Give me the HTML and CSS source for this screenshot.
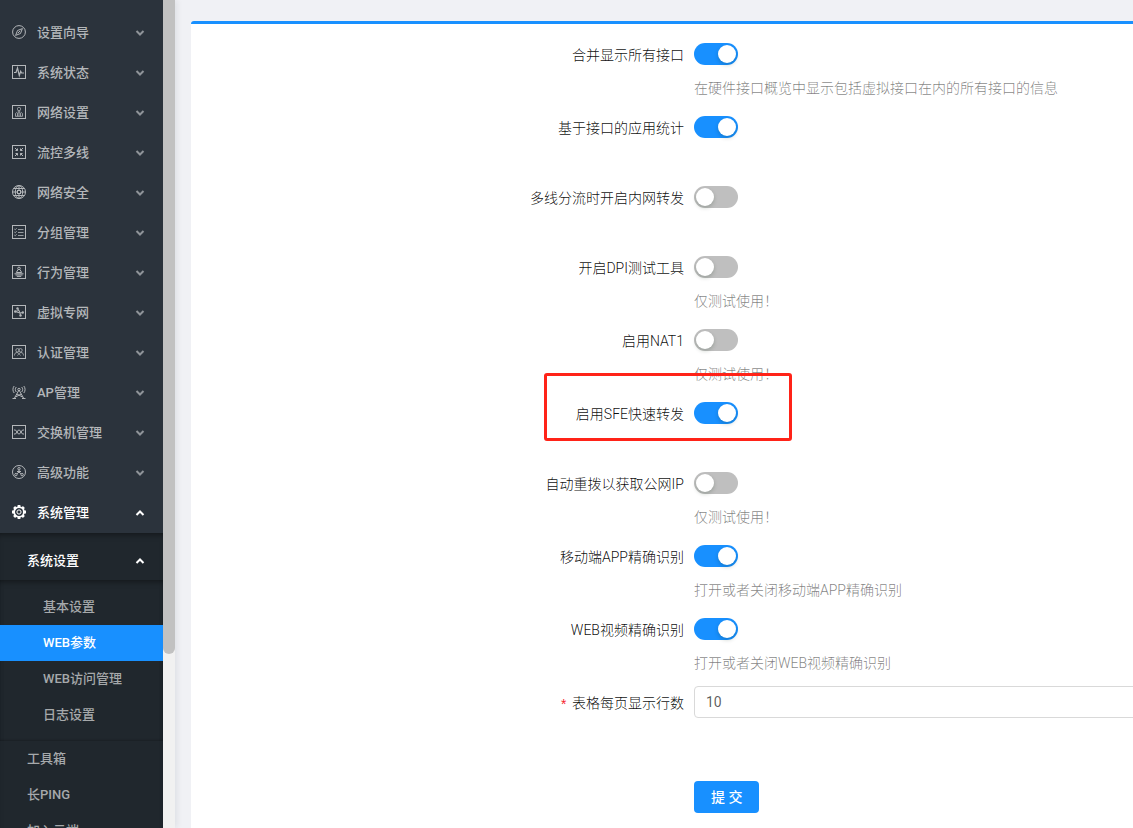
FILE: index.html
```html
<!DOCTYPE html>
<html lang="zh-CN">
<head>
    <meta charset="UTF-8">
    <meta name="viewport" content="width=device-width, initial-scale=1.0">
    <title>WEB参数</title>
    <link rel="stylesheet" href="styles.css">
</head>
<body>
    <div class="layout">
        <nav class="sidebar">
            <div class="menu">
                <button class="menu-item" type="button">
                    <svg class="icon" viewBox="0 0 14 14"><circle cx="7" cy="7" r="6.4"/><path d="M10.4 3.6L8.5 8.5L3.6 10.4L5.5 5.5ZM5.8 8.2L8.2 5.8"/></svg>
                    <span>设置向导</span>
                    <svg class="arrow" viewBox="0 0 10 8"><path d="M1.5 2L5 5.5L8.5 2"/></svg>
                </button>
                <button class="menu-item" type="button">
                    <svg class="icon" viewBox="0 0 14 14"><rect x=".5" y=".5" width="13" height="13"/><path stroke-width="1.2" d="M2 7.5H4L5.5 3L7.3 10.5L8.7 6.3L9.6 8H12"/></svg>
                    <span>系统状态</span>
                    <svg class="arrow" viewBox="0 0 10 8"><path d="M1.5 2L5 5.5L8.5 2"/></svg>
                </button>
                <button class="menu-item" type="button">
                    <svg class="icon" viewBox="0 0 14 14"><rect x=".5" y=".5" width="13" height="13"/><g class="thin"><rect x="5.5" y="2.5" width="3" height="3" rx="1"/><path d="M6.3 5.5V7.5M7.7 5.5V7.5M3.5 11.3V8.5L4.7 7.5L5.8 8.5V11.3ZM5.8 11.3V8.5L7 7.5L8.2 8.5V11.3ZM8.2 11.3V8.5L9.3 7.5L10.5 8.5V11.3Z"/></g></svg>
                    <span>网络设置</span>
                    <svg class="arrow" viewBox="0 0 10 8"><path d="M1.5 2L5 5.5L8.5 2"/></svg>
                </button>
                <button class="menu-item" type="button">
                    <svg class="icon" viewBox="0 0 14 14"><rect x=".5" y=".5" width="13" height="13"/><path d="M3 3L5.5 5.5M11 3L8.5 5.5M3 11L5.5 8.5M11 11L8.5 8.5M3.5 5.5H5.5V3.5M10.5 5.5H8.5V3.5M3.5 8.5H5.5V10.5M10.5 8.5H8.5V10.5"/></svg>
                    <span>流控多线</span>
                    <svg class="arrow" viewBox="0 0 10 8"><path d="M1.5 2L5 5.5L8.5 2"/></svg>
                </button>
                <button class="menu-item" type="button">
                    <svg class="icon" viewBox="0 0 14 14"><circle cx="7" cy="7" r="6.5"/><ellipse cx="7" cy="7" rx="3.7" ry="6.5"/><path d="M1.5 3.5H12.5M1.5 10.5H12.5M.5 7H5M9 7H13.5M7 .5V5M7 9V13.5"/><rect x="5.5" y="5.5" width="3" height="3"/></svg>
                    <span>网络安全</span>
                    <svg class="arrow" viewBox="0 0 10 8"><path d="M1.5 2L5 5.5L8.5 2"/></svg>
                </button>
                <button class="menu-item" type="button">
                    <svg class="icon" viewBox="0 0 14 14"><rect x=".5" y=".5" width="13" height="13"/><g class="thin"><path d="M2.3 4L3.2 4.8L4.7 3.2M2.3 7L3.2 7.8L4.7 6.2M2.3 10L3.2 10.8L4.7 9.2M6 4.5H11.5M6 7.5H11.5M6 10.5H11.5"/></g></svg>
                    <span>分组管理</span>
                    <svg class="arrow" viewBox="0 0 10 8"><path d="M1.5 2L5 5.5L8.5 2"/></svg>
                </button>
                <button class="menu-item" type="button">
                    <svg class="icon" viewBox="0 0 14 14"><rect x=".5" y=".5" width="13" height="13"/><circle cx="7" cy="3.4" r="1.3"/><path d="M6 4.6L4.3 7.5H9.7L8 4.6M2.5 8.8H11.5M3.5 10H10.5M4.8 11.4H9.2"/></svg>
                    <span>行为管理</span>
                    <svg class="arrow" viewBox="0 0 10 8"><path d="M1.5 2L5 5.5L8.5 2"/></svg>
                </button>
                <button class="menu-item" type="button">
                    <svg class="icon" viewBox="0 0 14 14"><rect x=".5" y=".5" width="13" height="13"/><path d="M3 6.5L7 5.5L5.5 3.5M7 5.5L8 8L11 7.5M8 8L8.5 10.5M3 6.5L8 8"/><g class="solid"><circle cx="5.5" cy="3.5" r="1.2"/><circle cx="3.2" cy="6.5" r="1.2"/><circle cx="8.5" cy="10.5" r="1.2"/><circle cx="10.8" cy="7.5" r="1.2"/></g></svg>
                    <span>虚拟专网</span>
                    <svg class="arrow" viewBox="0 0 10 8"><path d="M1.5 2L5 5.5L8.5 2"/></svg>
                </button>
                <button class="menu-item" type="button">
                    <svg class="icon" viewBox="0 0 14 14"><rect x=".5" y=".5" width="13" height="13"/><g class="thin"><circle cx="5.5" cy="5.2" r="1.7"/><circle cx="8.5" cy="5.2" r="1.7"/><path d="M2.5 10.5C2.5 8.5 3.5 7.5 5 7.5C6.5 7.5 7 9 8.5 10.5M11.5 10.5C11.5 8.5 10.5 7.5 9 7.5C7.5 7.5 7 9 5.5 10.5"/></g></svg>
                    <span>认证管理</span>
                    <svg class="arrow" viewBox="0 0 10 8"><path d="M1.5 2L5 5.5L8.5 2"/></svg>
                </button>
                <button class="menu-item" type="button">
                    <svg class="icon" viewBox="0 0 14 14"><path d="M2.2 1C.5 3 .5 6 2.2 8M11.8 1C13.5 3 13.5 6 11.8 8M4.3 2C3 3.5 3 5.5 4.3 7M9.7 2C11 3.5 11 5.5 9.7 7M7 5L2.5 13M7 5L11.5 13M4.8 9L10.5 12M9.2 9L3.5 12M.5 13.5H4M10 13.5H13.5"/><circle cx="7" cy="4.5" r="1.2"/></svg>
                    <span>AP管理</span>
                    <svg class="arrow" viewBox="0 0 10 8"><path d="M1.5 2L5 5.5L8.5 2"/></svg>
                </button>
                <button class="menu-item" type="button">
                    <svg class="icon" viewBox="0 0 14 14"><rect x=".5" y=".5" width="13" height="13"/><path d="M2 5H3.5L6.5 9H7.5L10.5 5H12M2 9H3.5L6.5 5H7.5L10.5 9H12"/></svg>
                    <span>交换机管理</span>
                    <svg class="arrow" viewBox="0 0 10 8"><path d="M1.5 2L5 5.5L8.5 2"/></svg>
                </button>
                <button class="menu-item" type="button">
                    <svg class="icon" viewBox="0 0 14 14"><circle cx="7" cy="7" r="6.5"/><circle cx="7" cy="3.7" r="1.2"/><circle cx="3.9" cy="9.6" r="1.2"/><circle cx="10.1" cy="9.6" r="1.2"/><path d="M7 5V7L5 8.8M7 7L9 8.8M5 6.5H9"/></svg>
                    <span>高级功能</span>
                    <svg class="arrow" viewBox="0 0 10 8"><path d="M1.5 2L5 5.5L8.5 2"/></svg>
                </button>
                <button class="menu-item open" type="button" aria-expanded="true">
                    <svg class="icon" viewBox="0 0 14 14"><circle cx="7" cy="7" r="4.9" stroke-width="1.8"/><circle cx="7" cy="7" r="2.1"/><path stroke-width="2.8" d="M7 0V2M7 12V14M0 7H2M12 7H14M2.1 2.1L3.5 3.5M10.5 10.5L11.9 11.9M11.9 2.1L10.5 3.5M3.5 10.5L2.1 11.9"/></svg>
                    <span>系统管理</span>
                    <svg class="arrow" viewBox="0 0 10 8"><path d="M1.5 6L5 2.5L8.5 6"/></svg>
                </button>
            </div>
            <div class="submenu">
                <button class="menu-item sub open" type="button" aria-expanded="true">
                    <span>系统设置</span>
                    <svg class="arrow" viewBox="0 0 10 8"><path d="M1.5 6L5 2.5L8.5 6"/></svg>
                </button>
                <div class="nested">
                    <a class="link deep" href="#">基本设置</a>
                    <a class="link deep active" href="#">WEB参数</a>
                    <a class="link deep" href="#">WEB访问管理</a>
                    <a class="link deep" href="#">日志设置</a>
                </div>
                <a class="link" href="#">工具箱</a>
                <a class="link" href="#">长PING</a>
                <a class="link" href="#">加入云端</a>
            </div>
        </nav>
        <div class="scrollbar"><div class="thumb"></div></div>

        <main class="content">
            <form class="card">
                <div class="row">
                    <label class="label" for="merge">合并显示所有接口</label>
                    <div class="control">
                        <input class="switch" type="checkbox" id="merge" checked>
                        <p class="hint">在硬件接口概览中显示包括虚拟接口在内的所有接口的信息</p>
                    </div>
                </div>
                <div class="row">
                    <label class="label" for="stats">基于接口的应用统计</label>
                    <div class="control">
                        <input class="switch" type="checkbox" id="stats" checked>
                    </div>
                </div>
                <div class="row">
                    <label class="label" for="forward">多线分流时开启内网转发</label>
                    <div class="control">
                        <input class="switch" type="checkbox" id="forward">
                    </div>
                </div>
                <div class="row">
                    <label class="label" for="dpi">开启DPI测试工具</label>
                    <div class="control">
                        <input class="switch" type="checkbox" id="dpi">
                        <p class="hint">仅测试使用！</p>
                    </div>
                </div>
                <div class="row">
                    <label class="label" for="nat1">启用NAT1</label>
                    <div class="control">
                        <input class="switch" type="checkbox" id="nat1">
                        <p class="hint">仅测试使用！</p>
                    </div>
                </div>
                <div class="row">
                    <label class="label" for="sfe">启用SFE快速转发</label>
                    <div class="control">
                        <input class="switch" type="checkbox" id="sfe" checked>
                        <div class="highlight"></div>
                    </div>
                </div>
                <div class="row">
                    <label class="label" for="redial">自动重拨以获取公网IP</label>
                    <div class="control">
                        <input class="switch" type="checkbox" id="redial">
                        <p class="hint">仅测试使用！</p>
                    </div>
                </div>
                <div class="row">
                    <label class="label" for="app">移动端APP精确识别</label>
                    <div class="control">
                        <input class="switch" type="checkbox" id="app" checked>
                        <p class="hint">打开或者关闭移动端APP精确识别</p>
                    </div>
                </div>
                <div class="row">
                    <label class="label" for="video">WEB视频精确识别</label>
                    <div class="control">
                        <input class="switch" type="checkbox" id="video" checked>
                        <p class="hint">打开或者关闭WEB视频精确识别</p>
                    </div>
                </div>
                <div class="row">
                    <label class="label required" for="rows">表格每页显示行数</label>
                    <div class="control">
                        <input class="text" type="text" id="rows" value="10">
                    </div>
                </div>
                <div class="row actions">
                    <div class="label"></div>
                    <div class="control">
                        <button class="submit" type="submit">提 交</button>
                    </div>
                </div>
            </form>
        </main>
    </div>
</body>
</html>
```

FILE: styles.css
```css
* {
    box-sizing: border-box;
}

body {
    margin: 0;
    font-family: Roboto, "Noto Sans CJK SC", sans-serif;
    font-size: 14px;
    background: #f0f1f5;
    overflow: hidden;
}

button, input {
    font-family: inherit;
    margin: 0;
}

.layout {
    display: flex;
    height: 100vh;
}

/* Sidebar */
.sidebar {
    flex: 0 0 163px;
    overflow: hidden;
    background: #2b333c;
}

.menu {
    padding: 12px 0 1px;
}

.menu-item {
    display: flex;
    align-items: center;
    width: 100%;
    height: 40px;
    padding: 0 18px 0 12px;
    border: none;
    background: none;
    color: #b4b7ba;
    font-size: 13px;
    font-weight: 500;
    text-align: left;
    cursor: pointer;
}

.menu-item span {
    padding-bottom: 2px;
}

.menu-item.sub {
    padding-left: 27px;
}

.menu-item.open {
    color: #fff;
}

.icon {
    width: 14px;
    height: 14px;
    margin-right: 11px;
    fill: none;
    stroke: currentColor;
}

.icon .thin {
    stroke-width: 0.8;
}

.icon .solid {
    fill: currentColor;
    stroke: none;
}

.arrow {
    width: 10px;
    height: 8px;
    margin-left: auto;
    margin-top: 2px;
    fill: none;
    stroke: #8f9499;
    stroke-width: 2;
}

.open .arrow {
    stroke: #fff;
}

.submenu {
    padding-top: 7px;
    background: #20272d;
    box-shadow: inset 0 5px 6px -4px rgba(0, 0, 0, 0.5);
}

.nested {
    padding: 9px 0 8px;
    box-shadow: inset 0 5px 6px -4px rgba(0, 0, 0, 0.5), inset 0 -2px 3px -2px rgba(0, 0, 0, 0.4);
}

.link {
    display: block;
    height: 36px;
    padding-left: 27px;
    line-height: 36px;
    color: #a6a9ab;
    font-size: 13px;
    font-weight: 500;
    text-decoration: none;
}

.link.deep {
    padding-left: 43px;
}

.link.active {
    background: #1890ff;
    color: #fff;
}

.scrollbar {
    flex: 0 0 12px;
    background: #f1f1f1;
    box-shadow: 2px 0 6px rgba(0, 21, 41, 0.08);
}

.thumb {
    height: 79%;
    border-radius: 0 0 6px 6px;
    background: #c1c1c1;
}

/* Form */
.content {
    flex: 1;
    min-width: 0;
    padding: 21px 0 0 16px;
    overflow: hidden;
}

.card {
    min-height: 100%;
    margin-right: -7px;
    padding-top: 10px;
    border-top: 3px solid #1890ff;
    border-radius: 3px;
    background: #fff;
}

.row {
    display: flex;
    min-height: 70px;
}

.label {
    flex: 0 0 53%;
    padding-right: 10px;
    line-height: 42px;
    text-align: right;
    color: rgba(0, 0, 0, 0.95);
    font-weight: 300;
}

.required::before {
    content: "*";
    margin-right: 4px;
    color: #f5222d;
    font-family: "Liberation Mono", monospace;
    font-weight: 400;
    line-height: 1;
    vertical-align: -2px;
}

.control {
    position: relative;
    flex: 1;
    padding: 4px 0;
}

.switch {
    appearance: none;
    display: block;
    width: 44px;
    height: 22px;
    margin: 5px 0;
    padding: 2px;
    border-radius: 11px;
    background: #bfbfbf;
    cursor: pointer;
}

.switch::before {
    content: "";
    display: block;
    width: 18px;
    height: 18px;
    border-radius: 50%;
    background: #fff;
    box-shadow: 0 2px 4px rgba(0, 35, 11, 0.2);
}

.switch:checked {
    background: #1890ff;
}

.switch:checked::before {
    margin-left: auto;
}

.hint {
    margin: 12px 0 4px;
    line-height: 22px;
    color: rgba(0, 0, 0, 0.5);
    font-weight: 300;
}

.text {
    display: block;
    width: 100%;
    height: 32px;
    padding: 0 11px;
    border: 1px solid #d9d9d9;
    border-radius: 4px;
    color: rgba(0, 0, 0, 0.65);
    font-size: 14px;
}

.actions {
    margin-top: 25px;
}

.submit {
    height: 32px;
    padding: 0 17px 2px;
    border: none;
    border-radius: 4px;
    background: #1890ff;
    color: #fff;
    font-size: 14px;
    font-weight: 500;
    cursor: pointer;
}

/* Red frame round the SFE switch */
.highlight {
    position: absolute;
    top: -20px;
    left: -150px;
    width: 248px;
    height: 68px;
    border: 3px solid #ff2318;
    border-radius: 3px;
    pointer-events: none;
}
```
